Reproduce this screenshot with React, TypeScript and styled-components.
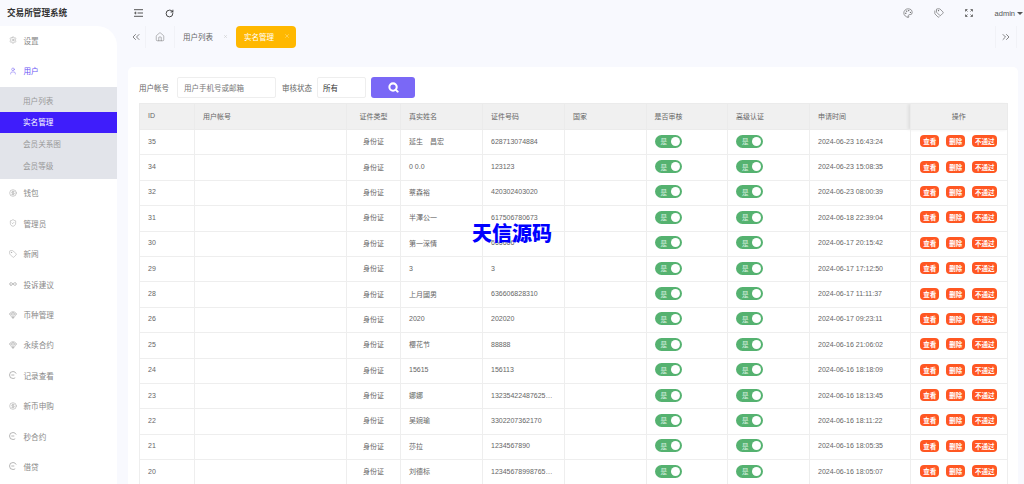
import React from "react";
import styled, { createGlobalStyle } from "styled-components";
import {
  Settings, User, CircleDollarSign, ShieldCheck, Tag, Gem, House, RotateCw,
  ChevronsLeft, ChevronsRight, Palette, Tags, Search, X, Infinity as InfinityIcon,
} from "lucide-react";

const FONT = `"Liberation Sans", "Noto Sans CJK SC", sans-serif`;

const GlobalStyle = createGlobalStyle`
  html, body { margin: 0; height: 100%; overflow: hidden; background: #f8f9fe; }
  #root { height: 100%; }
  * { box-sizing: border-box; }
  body { font-family: ${FONT}; color: #666; }
`;

const Page = styled.div`
  display: grid;
  grid-template-columns: 117px 1fr;
  grid-template-rows: 26px 41px 1fr;
  width: 1024px;
  height: 484px;
  overflow: hidden;
  position: relative;
`;

const Logo = styled.div`
  display: flex;
  align-items: center;
  padding: 0 0 2px 7px;
  font-size: 8.6px;
  font-weight: 700;
  color: #333;
  white-space: nowrap;
`;

const TopBar = styled.div`
  display: flex;
  align-items: center;
  padding: 0 0 0 6.500px;
  color: #444;
`;

const TopIcon = styled.span`
  display: flex;
  align-items: center;
  justify-content: center;
  width: 30.500px;
  flex: none;
  color: #555;
`;

const TopSpacer = styled.div`
  flex: 1;
`;

const AdminName = styled.span`
  font-size: 7.5px;
  color: #555;
  margin-left: 10px;
  white-space: nowrap;
`;

const Caret = styled.span`
  width: 0;
  height: 0;
  border-left: 3px solid transparent;
  border-right: 3px solid transparent;
  border-top: 3.5px solid #555;
  margin: 1px 1px 0 2px;
`;

const Sidebar = styled.nav`
  grid-row: 2 / 4;
  background: #fff;
  border-top-right-radius: 20px;
  overflow: hidden;
`;

const MenuItem = styled.div<{ $active?: boolean }>`
  display: flex;
  align-items: center;
  height: 30.4px;
  padding: 0 0 2px 9px;
  gap: 6.500px;
  font-size: 7.6px;
  color: ${(p) => (p.$active ? "#6a55f5" : "#888")};
  white-space: nowrap;
`;

const MenuIcon = styled.span`
  display: flex;
  width: 8px;
  justify-content: center;
  flex: none;
`;

const SubMenu = styled.div`
  background: #e2e4ea;
  padding: 3px 0 2px;
`;

const SubItem = styled.div<{ $active?: boolean }>`
  display: flex;
  align-items: center;
  height: 21.75px;
  padding: 0 0 1px 23px;
  font-size: 7.6px;
  background: ${(p) => (p.$active ? "#3f1dfb" : "transparent")};
  color: ${(p) => (p.$active ? "#fff" : "#999")};
`;

const TabBar = styled.div`
  display: flex;
  align-items: flex-start;
  height: 22px;
  color: #666;
`;

const TabIconCell = styled.div<{ $w: number; $left?: boolean; $pad?: number }>`
  display: flex;
  align-items: center;
  justify-content: center;
  width: ${(p) => p.$w}px;
  height: 22px;
  padding-left: ${(p) => p.$pad ?? 0}px;
  flex: none;
  color: #666;
  border-right: ${(p) => (p.$left ? "none" : "1px solid #f1f2f7")};
  border-left: ${(p) => (p.$left ? "1px solid #f1f2f7" : "none")};
`;

const Tab = styled.div<{ $active?: boolean }>`
  display: flex;
  align-items: center;
  justify-content: space-between;
  width: ${(p) => (p.$active ? 60 : 59)}px;
  height: 21.5px;
  padding: 0 6px 1px 8px;
  margin-right: ${(p) => (p.$active ? 0 : 2)}px;
  border-radius: 4px;
  font-size: 7.5px;
  white-space: nowrap;
  background: ${(p) => (p.$active ? "#ffb800" : "transparent")};
  color: ${(p) => (p.$active ? "#fff" : "#666")};
`;

const TabClose = styled.span<{ $active?: boolean }>`
  display: flex;
  color: ${(p) => (p.$active ? "#ffe29a" : "#b8b8b8")};
`;

const TabSpacer = styled.div`
  flex: 1;
`;

const Content = styled.main`
  padding: 0 6px 0 11px;
  min-width: 0;
  overflow: hidden;
`;

const Card = styled.section`
  background: #fff;
  border-radius: 5px 5px 0 0;
  padding: 10px 10px 0 11px;
  height: 100%;
`;

const FilterRow = styled.form`
  display: flex;
  align-items: center;
  height: 21px;
  margin-bottom: 5px;
  font-size: 7.5px;
`;

const FilterLabel = styled.label<{ $gap: number }>`
  white-space: nowrap;
  color: #666;
  margin-right: ${(p) => p.$gap}px;
`;

const TextInput = styled.div`
  display: flex;
  align-items: center;
  width: 99px;
  height: 21px;
  padding-left: 6px;
  margin-right: 6px;
  border: 1px solid #eee;
  border-radius: 2px;
  color: #777;
`;

const SelectBox = styled.div`
  display: flex;
  align-items: center;
  width: 49px;
  height: 21px;
  padding-left: 5px;
  margin-right: 5px;
  border: 1px solid #eee;
  border-radius: 2px;
  color: #333;
`;

const SearchButton = styled.button`
  display: flex;
  align-items: center;
  justify-content: center;
  width: 44px;
  height: 21px;
  padding: 0;
  border: none;
  border-radius: 3px;
  background: #7a68f6;
  color: #fff;
`;

const Table = styled.table`
  width: 868px;
  table-layout: fixed;
  border-collapse: collapse;
  font-size: 7px;
  color: #666;
`;

const Th = styled.th<{ $center?: boolean; $fixed?: boolean }>`
  height: 26px;
  padding: 0 8px 2px;
  background: #f0f0f0;
  border: 1px solid #ebebeb;
  font-weight: 400;
  color: #666;
  text-align: ${(p) => (p.$center ? "center" : "left")};
  box-shadow: ${(p) => (p.$fixed ? "-2px 0 3px rgba(0,0,0,.07)" : "none")};
`;

const Td = styled.td<{ $center?: boolean; $fixed?: boolean }>`
  height: 25.4px;
  padding: 0 8px 2px;
  border: 1px solid #eeeeee;
  white-space: nowrap;
  overflow: hidden;
  text-overflow: ellipsis;
  text-align: ${(p) => (p.$center ? "center" : "left")};
  box-shadow: ${(p) => (p.$fixed ? "-2px 0 3px rgba(0,0,0,.07)" : "none")};
`;

const Toggle = styled.span`
  display: inline-flex;
  align-items: center;
  justify-content: space-between;
  width: 27px;
  height: 13px;
  padding: 0 2px 0 6px;
  border-radius: 7px;
  background: #55b270;
  color: #dff3e5;
  font-size: 6.5px;
  vertical-align: middle;
`;

const Knob = styled.i`
  width: 9px;
  height: 9px;
  border-radius: 50%;
  background: #fff;
`;

const Actions = styled.div`
  display: flex;
  justify-content: center;
  gap: 7px;
`;

const ActionButton = styled.span<{ $wide?: boolean }>`
  display: flex;
  align-items: center;
  justify-content: center;
  width: ${(p) => (p.$wide ? 25 : 19)}px;
  height: 12px;
  border-radius: 4px;
  background: #ff5722;
  color: #fff;
  font-size: 6.5px;
  font-weight: 700;
`;

const Watermark = styled.div`
  position: absolute;
  left: 472px;
  top: 222px;
  font-size: 20px;
  line-height: 25px;
  font-weight: 900;
  color: #0000ff;
  white-space: nowrap;
`;

const MenuLines = () => (
  <svg width="9" height="8" viewBox="0 0 9 8" fill="none" stroke="#555" strokeWidth="1">
    <path d="M0 .7h9M3.500 4h5.500M0 7.300h9" />
    <path d="M2 2.800.4 4 2 5.200z" fill="#555" strokeWidth=".5" />
  </svg>
);

const Expand = () => (
  <svg width="8" height="8" viewBox="0 0 8 8" fill="none" stroke="#666" strokeWidth=".9">
    <path d="M.5 2.500v-2h2M7.500 2.500v-2h-2M.5 5.500v2h2M7.500 5.500v2h-2M.7.7l1.800 1.800M7.300.7 5.500 2.500M.7 7.300l1.800-1.800M7.300 7.300 5.500 5.500" />
  </svg>
);

const CircleE = () => (
  <svg width="8" height="8" viewBox="0 0 8 8" fill="none" stroke="currentColor" strokeWidth=".6">
    <circle cx="4" cy="4" r="3.500" strokeDasharray="17 5" strokeDashoffset="-3" />
    <path d="M2.300 4h3" />
  </svg>
);

const menuTop = [
  { label: "钱包", icon: <CircleDollarSign size={8} strokeWidth={1.2} /> },
  { label: "管理员", icon: <ShieldCheck size={8} strokeWidth={1.2} /> },
  { label: "新闻", icon: <Tag size={8} strokeWidth={1.2} /> },
  { label: "投诉建议", icon: <InfinityIcon size={8} strokeWidth={1.6} /> },
  { label: "币种管理", icon: <Gem size={8} strokeWidth={1.2} /> },
  { label: "永续合约", icon: <Gem size={8} strokeWidth={1.2} /> },
  { label: "记录查看", icon: <CircleE /> },
  { label: "新币申购", icon: <CircleDollarSign size={8} strokeWidth={1.2} /> },
  { label: "秒合约", icon: <CircleE /> },
  { label: "借贷", icon: <CircleE /> },
];

const subMenu = ["用户列表", "实名管理", "会员关系图", "会员等级"];

const columns = [55, 152, 54, 82, 82, 81.5, 81.5, 82, 100.5, 97.5];

const rows = [
  ["35", "延生　昌宏", "628713074884", "2024-06-23 16:43:24"],
  ["34", "0 0.0", "123123", "2024-06-23 15:08:35"],
  ["32", "蔡森裕", "420302403020", "2024-06-23 08:00:39"],
  ["31", "半澤公一", "617506780673", "2024-06-18 22:39:04"],
  ["30", "第一深情", "666666", "2024-06-17 20:15:42"],
  ["29", "3", "3", "2024-06-17 17:12:50"],
  ["28", "上月國男", "636606828310", "2024-06-17 11:11:37"],
  ["26", "2020", "202020", "2024-06-17 09:23:11"],
  ["25", "樱花节", "88888", "2024-06-16 21:06:02"],
  ["24", "15615", "156113", "2024-06-16 18:18:09"],
  ["23", "娜娜", "132354224876253698", "2024-06-16 18:13:45"],
  ["22", "吴婉瑜", "3302207362170", "2024-06-16 18:11:22"],
  ["21", "莎拉", "1234567890", "2024-06-16 18:05:35"],
  ["20", "刘德标", "123456789987654321", "2024-06-16 18:05:07"],
];

export default function App() {
  return (
    <Page>
      <GlobalStyle />
      <Logo>交易所管理系统</Logo>
      <TopBar>
        <TopIcon><MenuLines /></TopIcon>
        <TopIcon><RotateCw size={9} strokeWidth={2.4} color="#333" /></TopIcon>
        <TopSpacer />
        <TopIcon><Palette size={10} strokeWidth={1.4} /></TopIcon>
        <TopIcon><Tags size={10} strokeWidth={1.4} /></TopIcon>
        <TopIcon><Expand /></TopIcon>
        <AdminName>admin</AdminName>
        <Caret />
      </TopBar>
      <Sidebar>
        <MenuItem>
          <MenuIcon><Settings size={8} strokeWidth={1.2} /></MenuIcon>设置
        </MenuItem>
        <MenuItem $active>
          <MenuIcon><User size={8} strokeWidth={1.4} /></MenuIcon>用户
        </MenuItem>
        <SubMenu>
          {subMenu.map((s) => (
            <SubItem key={s} $active={s === "实名管理"}>{s}</SubItem>
          ))}
        </SubMenu>
        {menuTop.map((m) => (
          <MenuItem key={m.label}>
            <MenuIcon>{m.icon}</MenuIcon>
            {m.label}
          </MenuItem>
        ))}
      </Sidebar>
      <div>
        <TabBar>
          <TabIconCell $w={29} $pad={9}><ChevronsLeft size={12} strokeWidth={1.6} /></TabIconCell>
          <TabIconCell $w={29}><House size={10} strokeWidth={1.1} /></TabIconCell>
          <Tab>
            用户列表
            <TabClose><X size={5} strokeWidth={1.8} /></TabClose>
          </Tab>
          <Tab $active>
            实名管理
            <TabClose $active><X size={6} strokeWidth={2} /></TabClose>
          </Tab>
          <TabSpacer />
          <TabIconCell $w={21} $left><ChevronsRight size={12} strokeWidth={1.6} /></TabIconCell>
          <TabIconCell $w={8} $left />
        </TabBar>
      </div>
      <Content>
        <Card>
          <FilterRow>
            <FilterLabel $gap={8}>用户帐号</FilterLabel>
            <TextInput>用户手机号或邮箱</TextInput>
            <FilterLabel $gap={5}>审核状态</FilterLabel>
            <SelectBox>所有</SelectBox>
            <SearchButton type="button"><Search size={11} strokeWidth={4.5} /></SearchButton>
          </FilterRow>
          <Table>
            <colgroup>
              {columns.map((w, i) => (
                <col key={i} style={{ width: w }} />
              ))}
            </colgroup>
            <thead>
              <tr>
                <Th>ID</Th>
                <Th>用户帐号</Th>
                <Th $center>证件类型</Th>
                <Th>真实姓名</Th>
                <Th>证件号码</Th>
                <Th>国家</Th>
                <Th>是否审核</Th>
                <Th>高级认证</Th>
                <Th>申请时间</Th>
                <Th $center $fixed>操作</Th>
              </tr>
            </thead>
            <tbody>
              {rows.map(([id, name, card, time]) => (
                <tr key={id}>
                  <Td>{id}</Td>
                  <Td />
                  <Td $center>身份证</Td>
                  <Td>{name}</Td>
                  <Td>{card}</Td>
                  <Td />
                  <Td><Toggle>是<Knob /></Toggle></Td>
                  <Td><Toggle>是<Knob /></Toggle></Td>
                  <Td>{time}</Td>
                  <Td $fixed>
                    <Actions>
                      <ActionButton>查看</ActionButton>
                      <ActionButton>删除</ActionButton>
                      <ActionButton $wide>不通过</ActionButton>
                    </Actions>
                  </Td>
                </tr>
              ))}
            </tbody>
          </Table>
        </Card>
      </Content>
      <Watermark>天信源码</Watermark>
    </Page>
  );
}
